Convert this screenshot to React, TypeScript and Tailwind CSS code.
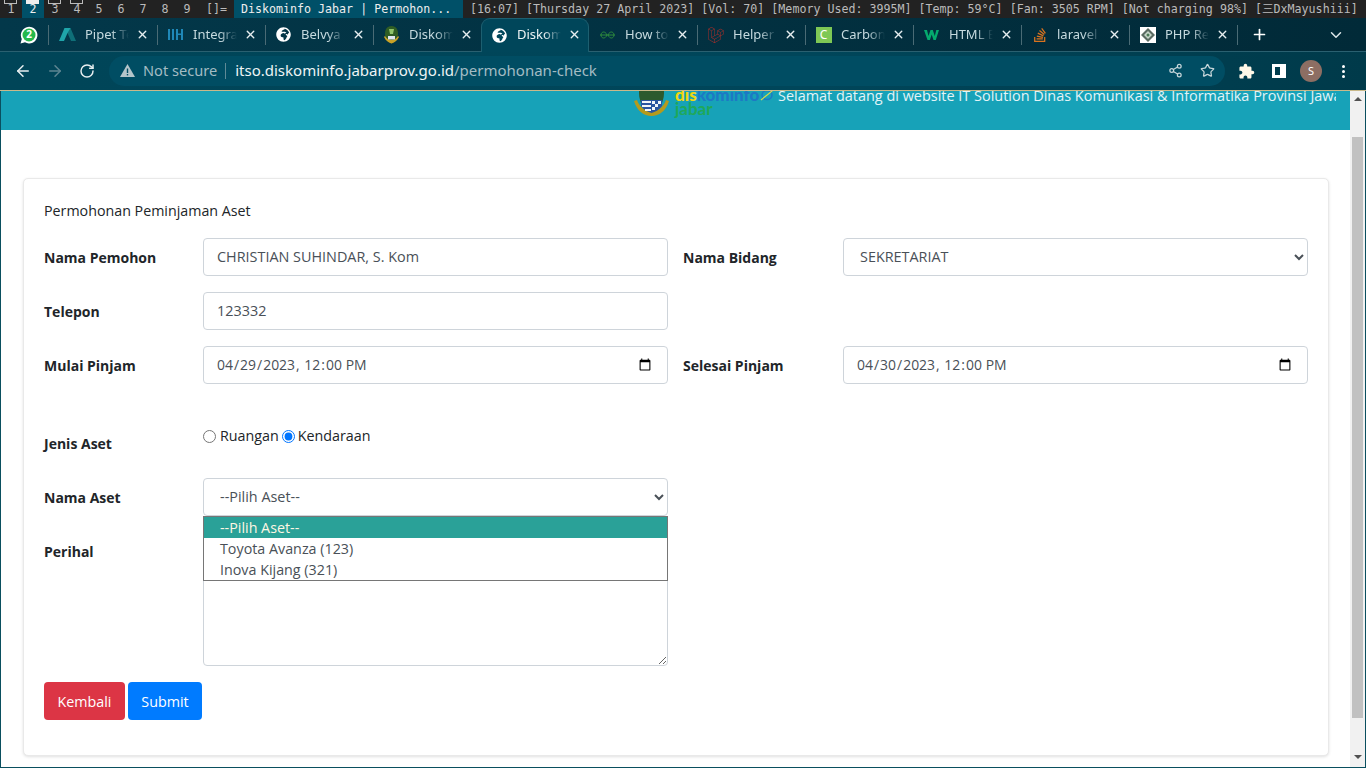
import { ArrowLeft, ArrowRight, RotateCw, Share2, Star, Plus, ChevronDown, X } from "lucide-react";
import { FaGlobeAfrica, FaLaravel, FaStackOverflow } from "react-icons/fa";
import { MdExtension } from "react-icons/md";

const statusText =
  "[16:07] [Thursday 27 April 2023] [Vol: 70] [Memory Used: 3995M] [Temp: 59°C] [Fan: 3505 RPM] [Not charging 98%] [三DxMayushiii]";

function TopBar() {
  const occupied = [1, 3, 4];
  return (
    <div className="flex h-[18px] shrink-0 bg-[#222222] text-[11.65px] leading-[18px] text-[#bbbbbb] [font-family:'DejaVu_Sans_Mono','Noto_Sans_CJK_SC',monospace] whitespace-nowrap">
      {[1, 2, 3, 4, 5, 6, 7, 8, 9].map((n) => (
        <div
          key={n}
          className={
            n === 2
              ? "relative w-[22px] text-center bg-[#005068] text-[#eeeeee]"
              : "relative w-[22px] text-center"
          }
        >
          {n}
          {n === 2 && <span className="absolute left-[4px] top-0 h-[4px] w-[13px] bg-[#eeeeee]" />}
          {occupied.includes(n) && (
            <span className="absolute left-[4px] top-0 h-[4px] w-[13px] border border-t-0 border-[#bbbbbb]" />
          )}
        </div>
      ))}
      <div className="w-[36px] pl-[8px]">[]=</div>
      <div className="w-[229px] bg-[#005068] pl-[7px] text-[#eeeeee]">Diskominfo Jabar | Permohon...</div>
      <div className="flex-1 pl-[7px]">{statusText}</div>
    </div>
  );
}

function WhatsappIcon() {
  return (
    <svg width="18" height="18" viewBox="0 0 18 18">
      <path d="M0.500 17.500l1.300-4.500A8.300 8.300 0 1 1 5 16.300z" fill="#ffffff" />
      <circle cx="9" cy="9" r="6.500" fill="#25b84c" />
      <text x="9" y="12.400" textAnchor="middle" fontSize="10" fontWeight="700" fill="#ffffff" fontFamily="Noto Sans">
        2
      </text>
    </svg>
  );
}

const icons: Record<string, React.ReactNode> = {
  pipet: (
    <svg width="17" height="13" viewBox="0 0 17 13">
      <path d="M5.500 0h6L17 13h-5L8.500 5z" fill="#0f6f78" />
      <path d="M5.500 0h6L8.500 5 5 13H0z" fill="#1fa5aa" />
    </svg>
  ),
  integra: (
    <svg width="15" height="11" viewBox="0 0 15 11" fill="#1f88b8">
      <rect x="0" y="0" width="2" height="11" />
      <rect x="4" y="0" width="2" height="11" />
      <rect x="8" y="0" width="2" height="11" />
      <rect x="13" y="0" width="2" height="11" />
      <rect x="8" y="4.500" width="7" height="1.500" />
    </svg>
  ),
  globe: <FaGlobeAfrica size={15} color="#ffffff" />,
  jabar: (
    <svg width="17" height="18" viewBox="0 0 17 18">
      <path d="M8.500 0C3.500 0 2 4 2 8c0 5 3 8 6.500 9.500C12 16 15 13 15 8c0-4-1.500-8-6.500-8z" fill="#2f5d24" />
      <path d="M1 11c2 4 5 6 7.500 6.500C11 17 14 15 16 11l-1-1c-2 3-4 4-6.500 4S4 13 2 10z" fill="#c9a227" />
      <rect x="5" y="10" width="7" height="3.500" fill="#dfe7f2" />
      <path d="M6 3h5l-1 5H7z" fill="#8fc46a" />
    </svg>
  ),
  howto: (
    <svg width="15" height="8" viewBox="0 0 15 8" fill="none" stroke="#2e8b3d" strokeWidth="1">
      <path d="M0 4h15M7 4C6 1.500 4.500 1 3.500 1S1 2 1 4s1.500 3 2.500 3S6 6.500 7 4M8 4c1-2.500 2.500-3 3.500-3S14 2 14 4s-1.500 3-2.500 3S9 6.500 8 4" />
    </svg>
  ),
  laravel: <FaLaravel size={16} color="#a92f2a" />,
  carbon: (
    <div className="flex h-[16px] w-[16px] items-center justify-center bg-[#7ec855] text-[12px] leading-none text-white">C</div>
  ),
  w3: (
    <svg width="16" height="12" viewBox="0 0 16 12">
      <path d="M0 1h3l1.500 6L6.500 1h2.300l2 6L12.300 1H15l-3.200 10H9.500L7.700 5.500 5.900 11H3.500z" fill="#04aa6d" />
    </svg>
  ),
  so: <FaStackOverflow size={16} color="#d9731f" />,
  php: (
    <div className="flex h-[16px] w-[16px] items-center justify-center bg-white">
      <svg width="14" height="14" viewBox="0 0 14 14">
        <path d="M7 0l7 7-7 7-7-7z" fill="#5b6b62" />
        <path d="M7 3l4 4-4 4-4-4z" fill="#c7d6c9" />
        <circle cx="7" cy="7" r="1.500" fill="#4d7a57" />
      </svg>
    </div>
  ),
};

const tabs = [
  { title: "Pipet Te", icon: "pipet" },
  { title: "Integra", icon: "integra" },
  { title: "Belvya", icon: "globe" },
  { title: "Diskom", icon: "jabar" },
  { title: "Diskom", icon: "globe", active: true },
  { title: "How to", icon: "howto" },
  { title: "Helper", icon: "laravel" },
  { title: "Carbon", icon: "carbon" },
  { title: "HTML E", icon: "w3" },
  { title: "laravel", icon: "so" },
  { title: "PHP Re", icon: "php" },
];

function Tab({ title, icon, active, hideDivider }: { title: string; icon: string; active?: boolean; hideDivider?: boolean }) {
  return (
    <div
      className={
        active
          ? "relative flex h-[34px] w-[108px] shrink-0 items-center rounded-t-[9px] border border-b-0 border-[#1d5f70] bg-[#00465a] pb-[1px] pl-[9px] text-[#eef4f5]"
          : "relative flex h-[33px] w-[108px] shrink-0 items-center pl-[10px] text-[#c6dadf]"
      }
    >
      <div className="flex w-[17px] justify-center">{icons[icon]}</div>
      <div className="ml-[9px] w-[44px] overflow-hidden whitespace-nowrap [mask-image:linear-gradient(to_right,black_60%,transparent)]">
        {title}
      </div>
      <X size={13} strokeWidth={2.600} className={active ? "absolute right-[7px] top-[9px] text-[#e6eef0]" : "absolute right-[8px] top-[10px] text-[#e6eef0]"} />
      {!active && !hideDivider && <span className="absolute right-[-1px] top-[7px] h-[20px] w-px bg-[#4a6b75]" />}
    </div>
  );
}

function TabStrip() {
  return (
    <div className="relative z-10 flex h-[34px] shrink-0 border-b border-[#2a6070] bg-[linear-gradient(to_right,#03384a,#012a38)] pl-[1px] text-[13px] [font-family:'Noto_Sans',sans-serif]">
      <div className="flex h-[33px] w-[47px] items-center justify-center pl-[9px]">
        <WhatsappIcon />
      </div>
      <div className="mt-[7px] h-[20px] w-px bg-[#4a6b75]" />
      {tabs.map((t, i) => (
        <Tab key={i} title={t.title} icon={t.icon} active={t.active} hideDivider={i === 3} />
      ))}
      <div className="flex h-[33px] w-[44px] items-center justify-center text-white">
        <Plus size={17} strokeWidth={2.400} />
      </div>
      <div className="ml-[46px] flex h-[33px] items-center text-[#dbe6e9]">
        <ChevronDown size={18} strokeWidth={2} />
      </div>
    </div>
  );
}

function ToolBar() {
  return (
    <div className="flex h-[38px] shrink-0 items-center border-0 bg-[linear-gradient(to_right,#004558,#00465a_60%,#003a4a)] pl-[14px] text-[#e8eff1] [font-family:'Noto_Sans',sans-serif]">
      <ArrowLeft size={18} strokeWidth={2} />
      <ArrowRight size={18} strokeWidth={2} className="ml-[14px] text-[#5d8591]" />
      <RotateCw size={16} strokeWidth={2.200} className="ml-[15px]" />
      <div className="ml-[14px] flex h-[30px] w-[1116px] items-center rounded-full bg-[#004d63] pb-[1px] pl-[11px] pr-[10px]">
        <svg width="15" height="13" viewBox="0 0 15 13">
          <path d="M7.500 0L15 13H0z" fill="#b4c5ca" />
          <rect x="6.800" y="4.500" width="1.400" height="4.500" fill="#004d63" />
          <rect x="6.800" y="10" width="1.400" height="1.400" fill="#004d63" />
        </svg>
        <span className="ml-[8px] text-[14.600px] text-[#a3bcc3]">Not secure</span>
        <span className="ml-[8px] mr-[9px] h-[16px] w-px bg-[#5f8a96]" />
        <span className="text-[15px] text-[#eef4f5]">itso.diskominfo.jabarprov.go.id</span>
        <span className="text-[15px] text-[#a3bcc3]">/permohonan-check</span>
        <div className="ml-auto flex items-center gap-[17px] text-[#c6d6da]">
          <Share2 size={15} />
          <Star size={15} />
        </div>
      </div>
      <MdExtension size={17} className="ml-[13px] text-[#fff8e8]" />
      <div className="ml-[17px] h-[14px] w-[14px] border-[3px] border-r-[6px] border-white" />
      <div className="ml-[14px] flex h-[22px] w-[22px] items-center justify-center rounded-full bg-[#8d6e63] text-[11px] text-white">S</div>
      <div className="ml-[20px] flex flex-col gap-[2px]">
        <span className="h-[3px] w-[3px] rounded-full bg-white" />
        <span className="h-[3px] w-[3px] rounded-full bg-white" />
        <span className="h-[3px] w-[3px] rounded-full bg-white" />
      </div>
    </div>
  );
}

function SiteHeader() {
  return (
    <div className="flex h-[39px] shrink-0 overflow-hidden bg-[#17a2b8] pl-[632px] pr-[14px]">
      <div className="-mt-[12px] flex h-[40px] shrink-0">
        <svg width="37" height="38" viewBox="0 0 37 38" className="shrink-0">
          <path d="M18.500 2C9 2 6 7 6 14c0 10 6 18 12.500 21C25 32 31 24 31 14c0-7-3-12-12.500-12z" fill="#2c5a2e" />
          <path d="M1 22c3 10 10 15 17.500 15S33 32 36 22l-3-1c-2 6-7 11-14.500 11S6 27 4 21z" fill="#b59a1c" />
          <path d="M8 21h21v6c-3 4-7 6-10.500 7C15 33 11 31 8 27z" fill="#2a55a0" />
          <path d="M9 22h9v2H9zM9 26h9v2H9zM12 30h6v2h-6zM19 22h3v3h-3zM25 22h3v3h-3zM22 25h3v3h-3zM19 28h3v3h-3z" fill="#f2f5f8" />
        </svg>
        <div className="ml-[5px] flex w-[103px] shrink-0 flex-col pt-[9px] font-black text-[17px] leading-[14px] [font-family:'Lato',sans-serif]">
          <div className="flex items-center whitespace-nowrap">
            <span className="text-[#f2d60f]">dis</span>
            <span className="text-[#1d79c4]">kominfo</span>
            <svg width="14" height="12" viewBox="0 0 14 12" fill="none" className="ml-[1px] shrink-0">
              <ellipse cx="7" cy="6" rx="5" ry="4.500" stroke="#1d79c4" strokeWidth="1.500" />
              <path d="M1 11C4 8 9 5 13 1" stroke="#d7d84a" strokeWidth="1.200" />
            </svg>
          </div>
          <div className="text-[17px] font-bold leading-[13px] text-[#1fa85a]">jabar</div>
        </div>
      </div>
      <div className="h-[39px] overflow-hidden whitespace-nowrap text-[14.450px] leading-[10px] text-[#e3f4f7]">
        Selamat datang di website IT Solution Dinas Komunikasi &amp; Informatika Provinsi Jawa Barat
      </div>
    </div>
  );
}

const labelClass = "w-[159px] shrink-0 pt-[9px] font-bold text-[#212529]";
const inputClass =
  "h-[38px] w-[465px] shrink-0 rounded-[4px] border border-[#ced4da] bg-white px-[13px] pb-[2px] text-[14.400px] text-[#495057] outline-none";
const dateClass =
  "h-[38px] w-[465px] shrink-0 rounded-[4px] border border-[#ced4da] bg-white pl-[12px] pr-[13px] text-[13.950px] text-[#495057] outline-none";

function Form() {
  return (
    <div className="mt-[48px] ml-[22px] mb-[12px] w-[1306px] shrink-0 rounded-[5px] border border-[#e9e9e9] bg-white px-[20px] pb-[35px] pt-[22px] shadow-[0_1px_3px_rgba(0,0,0,0.12)]">
      <div className="mb-[17px] h-[20px] text-[14.250px] leading-[20px] text-[#212529]">Permohonan Peminjaman Aset</div>

      <div className="flex">
        <label className={labelClass}>Nama Pemohon</label>
        <input className={inputClass} defaultValue="CHRISTIAN SUHINDAR, S. Kom" />
        <label className={labelClass + " ml-[15px] w-[160px]"}>Nama Bidang</label>
        <select className={inputClass + " pl-[12px]"} defaultValue="SEKRETARIAT">
          <option>SEKRETARIAT</option>
        </select>
      </div>

      <div className="mt-[16px] flex">
        <label className={labelClass}>Telepon</label>
        <input className={inputClass} defaultValue="123332" />
      </div>

      <div className="mt-[16px] flex">
        <label className={labelClass}>Mulai Pinjam</label>
        <input type="datetime-local" className={dateClass} defaultValue="2023-04-29T12:00" />
        <label className={labelClass + " ml-[15px] w-[160px]"}>Selesai Pinjam</label>
        <input type="datetime-local" className={dateClass} defaultValue="2023-04-30T12:00" />
      </div>

      <div className="mt-[40px] flex h-[38px]">
        <label className={labelClass}>Jenis Aset</label>
        <div className="flex items-start text-[14.300px] text-[#212529]">
          <label className="flex items-center leading-[24px]">
            <input type="radio" name="jenis" className="mr-[4px] h-[13px] w-[13px]" />
            Ruangan
          </label>
          <label className="ml-[3px] flex items-center leading-[24px]">
            <input type="radio" name="jenis" defaultChecked className="mr-[3px] h-[13px] w-[13px]" />
            Kendaraan
          </label>
        </div>
      </div>

      <div className="mt-[16px] flex">
        <label className={labelClass}>Nama Aset</label>
        <div className="relative">
          <select className={inputClass + " border-[#80bdff] pl-[12px]"} defaultValue="--Pilih Aset--">
            <option>--Pilih Aset--</option>
            <option>Toyota Avanza (123)</option>
            <option>Inova Kijang (321)</option>
          </select>
          <div className="absolute left-0 top-[38px] z-10 w-[465px] border border-[#767676] bg-white text-[14.300px] leading-[21px] text-[#495057]">
            <div className="bg-[#2aa198] pl-[16px] text-[#fdf6e3]">--Pilih Aset--</div>
            <div className="pl-[16px]">Toyota Avanza (123)</div>
            <div className="pl-[16px]">Inova Kijang (321)</div>
          </div>
        </div>
      </div>

      <div className="mt-[16px] flex">
        <label className={labelClass}>Perihal</label>
        <textarea className="h-[134px] w-[465px] shrink-0 rounded-[4px] border border-[#ced4da] bg-white" />
      </div>

      <div className="mt-[16px] flex gap-[3px]">
        <button className="h-[38px] w-[81px] rounded-[4px] bg-[#dc3545] pt-px text-[14.300px] text-white">Kembali</button>
        <button className="h-[38px] w-[74px] rounded-[4px] bg-[#007bff] pt-px text-[14.300px] text-white">Submit</button>
      </div>
    </div>
  );
}

function ScrollBar() {
  return (
    <div className="flex w-[15px] shrink-0 flex-col items-center bg-[#f1f1f1]">
      <div className="mt-[6px] h-0 w-0 border-x-[4px] border-b-[4px] border-x-transparent border-b-[#505050]" />
      <div className="mt-[36px] h-[581px] w-[11px] bg-[#c1c1c1]" />
      <div className="mt-[37px] h-0 w-0 border-x-[4px] border-t-[4px] border-x-transparent border-t-[#505050]" />
    </div>
  );
}

export default function App() {
  return (
    <div className="flex h-screen w-screen flex-col overflow-hidden bg-[#0a4f5f] [font-family:'Open_Sans',sans-serif]">
      <TopBar />
      <TabStrip />
      <ToolBar />
      <div className="h-px shrink-0 bg-[#c9b98a]" />
      <div className="flex min-h-0 flex-1 pl-px pr-px pb-px">
        <div className="flex min-w-0 flex-1 flex-col overflow-hidden bg-white text-[14px]">
          <SiteHeader />
          <Form />
        </div>
        <ScrollBar />
      </div>
    </div>
  );
}
